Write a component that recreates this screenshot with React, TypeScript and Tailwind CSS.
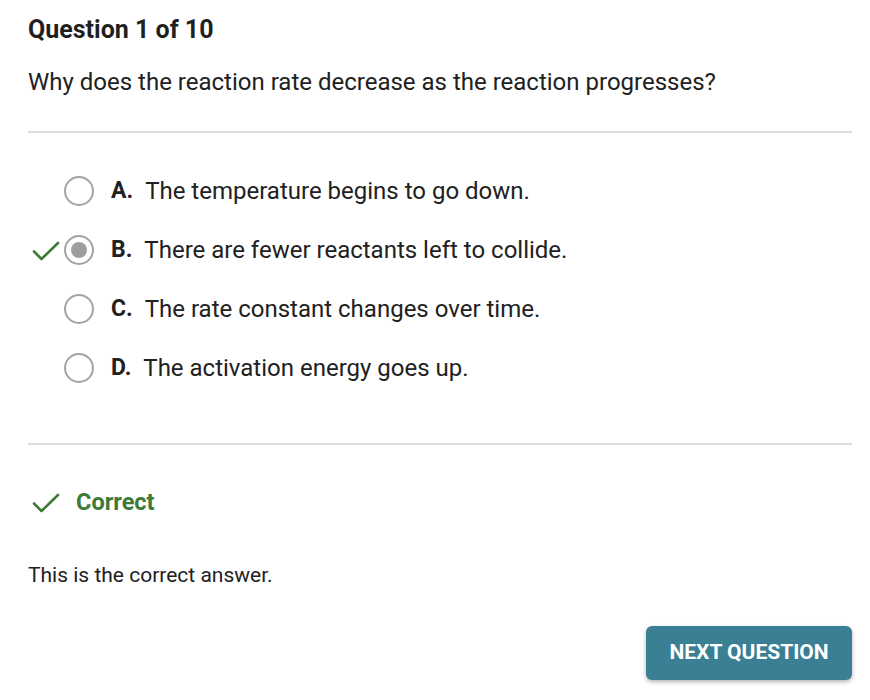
import React from "react";

const Check = ({ className }: { className?: string }) => (
  <svg viewBox="0 0 28 20" className={className} fill="none">
    <path d="M2 10.5 L9.5 18 L26 2" stroke="#3e7a38" strokeWidth="2.6" strokeLinecap="round" strokeLinejoin="round" />
  </svg>
);

const options = [
  { l: "A.", t: "The temperature begins to go down.", sel: false },
  { l: "B.", t: "There are fewer reactants left to collide.", sel: true },
  { l: "C.", t: "The rate constant changes over time.", sel: false },
  { l: "D.", t: "The activation energy goes up.", sel: false },
];

export default function App() {
  return (
    <div className="w-[870px] h-[700px] bg-white text-[#212121] px-[28px] pt-[14px] overflow-hidden" style={{ fontFamily: "Roboto, 'Liberation Sans', sans-serif" }}>
      <div className="w-[824px]">
        <h1 className="text-[25px] leading-[32px] font-bold text-[#1f1f1f]">Question 1 of 10</h1>
        <p className="mt-[20px] text-[24px] leading-[32px] text-[#212121]">Why does the reaction rate decrease as the reaction progresses?</p>
        <div className="mt-[33px] h-[2px] bg-[#dedede]" />
        <div className="pt-[42px] flex flex-col gap-[27px]">
          {options.map((o, i) => (
            <div key={i} className="flex items-center h-[32px] relative">
              {o.sel && <Check className="absolute left-[4px] top-[7px] w-[28px] h-[20px]" />}
              <div className="ml-[36px] w-[30px] h-[30px] rounded-full border-2 border-[#a3a3a3] flex items-center justify-center">
                {o.sel && <div className="w-[16px] h-[16px] rounded-full bg-[#9e9e9e]" />}
              </div>
              <span className="ml-[17px] text-[23px] font-bold text-[#212121]">{o.l}</span>
              <span className="ml-[12px] text-[24px] text-[#212121]">{o.t}</span>
            </div>
          ))}
        </div>
        <div className="mt-[59px] h-[2px] bg-[#dedede]" />
        <div className="mt-[43px] flex items-center h-[30px]">
          <Check className="ml-[4px] w-[28px] h-[20px]" />
          <span className="ml-[16px] text-[23.5px] font-bold text-[#3e7a38]">Correct</span>
        </div>
        <p className="mt-[43px] text-[21px] leading-[28px] text-[#212121]">This is the correct answer.</p>
        <div className="mt-[37px] flex justify-end">
          <button className="w-[206px] h-[54px] rounded-[6px] bg-[#3a7f93] text-white text-[21px] font-bold shadow-[0_2px_4px_rgba(0,0,0,0.3)]">NEXT QUESTION</button>
        </div>
      </div>
    </div>
  );
}
